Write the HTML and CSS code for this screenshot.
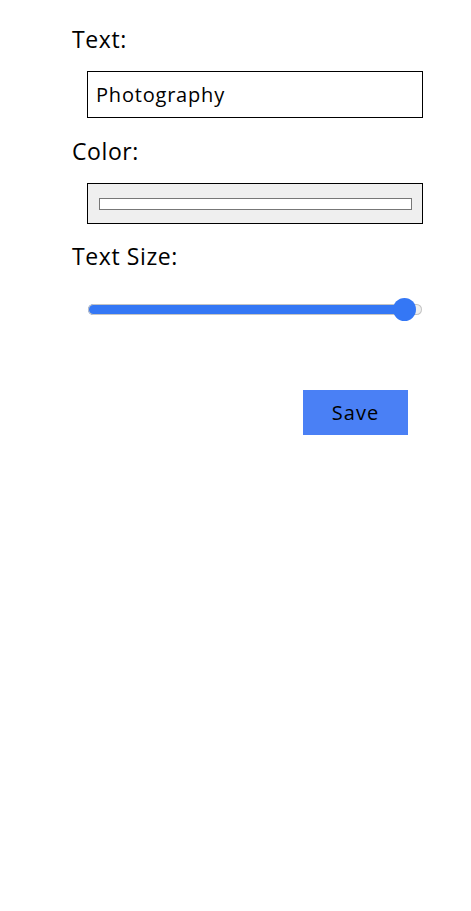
FILE: index.html
```html
<!DOCTYPE html>
<html lang="en">
<head>
<meta charset="utf-8">
<title>Text settings</title>
<link rel="stylesheet" href="styles.css">
</head>
<body>
<form class="form">
  <label class="label" for="txt">Text:</label>
  <div class="field field-text">
    <input id="txt" class="text-input" type="text" value="Photography">
  </div>
  <label class="label" for="clr">Color:</label>
  <div class="field">
    <input id="clr" class="color-input" type="color" value="#ffffff">
  </div>
  <label class="label" for="size">Text Size:</label>
  <div class="field slider-field">
    <input id="size" class="range" type="range" min="0" max="100" value="98" style="--fill: 94.7%">
  </div>
  <div class="actions">
    <button class="save" type="button">Save</button>
  </div>
</form>
</body>
</html>
```
FILE: styles.css
```css
html, body {
  margin: 0;
  padding: 0;
  background: #ffffff;
}

body {
  font-family: "Open Sans", "Noto Sans", "Liberation Sans", sans-serif;
  color: #000000;
}

.form {
  display: flex;
  flex-direction: column;
  width: 351px;
  padding: 24px 0 0 72px;
}

.label {
  display: block;
  font-size: 23px;
  letter-spacing: 0.6px;
  line-height: 30px;
  height: 30px;
  margin-bottom: 17px;
}

.field {
  padding-left: 15px;
  margin-bottom: 17px;
}

.field-text {
  margin-bottom: 18px;
}

.text-input {
  box-sizing: border-box;
  width: 336px;
  height: 47px;
  border: 1px solid #000000;
  border-radius: 0;
  padding: 0 8px;
  margin: 0;
  font-family: inherit;
  font-size: 20px;
  letter-spacing: 0.8px;
  color: #000000;
  background: #ffffff;
  outline: none;
}

.color-input {
  -webkit-appearance: none;
  appearance: none;
  box-sizing: border-box;
  display: block;
  width: 336px;
  height: 41px;
  margin: 0;
  padding: 0;
  border: 1px solid #000000;
  border-radius: 0;
  background: #efefef;
  cursor: pointer;
}

.color-input::-webkit-color-swatch-wrapper {
  padding: 14px 10px 13px 11px;
}

.color-input::-webkit-color-swatch {
  border: 1px solid #777777;
  border-radius: 0;
}

.slider-field {
  margin-top: 10px;
  margin-bottom: 69px;
}

.range {
  -webkit-appearance: none;
  appearance: none;
  display: block;
  width: 334px;
  height: 23px;
  margin: 0 0 0 1px;
  padding: 0;
  background: transparent;
}

.range::-webkit-slider-runnable-track {
  height: 11px;
  border-radius: 6px;
  background: linear-gradient(to right, #3477f5 0, #3477f5 var(--fill), #efefef var(--fill), #efefef 100%);
  box-shadow: inset 0 0 0 1px #c4c4c4;
}

.range::-webkit-slider-thumb {
  -webkit-appearance: none;
  appearance: none;
  width: 23px;
  height: 23px;
  margin-top: -6px;
  border: none;
  border-radius: 50%;
  background: #3477f5;
}

.actions {
  display: flex;
  justify-content: flex-end;
  padding-right: 15px;
}

.save {
  width: 105px;
  height: 45px;
  border: none;
  border-radius: 0;
  background: #4a80f5;
  color: #000000;
  font-family: inherit;
  font-size: 20px;
  letter-spacing: 1px;
  padding: 0;
  margin: 0;
  cursor: pointer;
}
```
